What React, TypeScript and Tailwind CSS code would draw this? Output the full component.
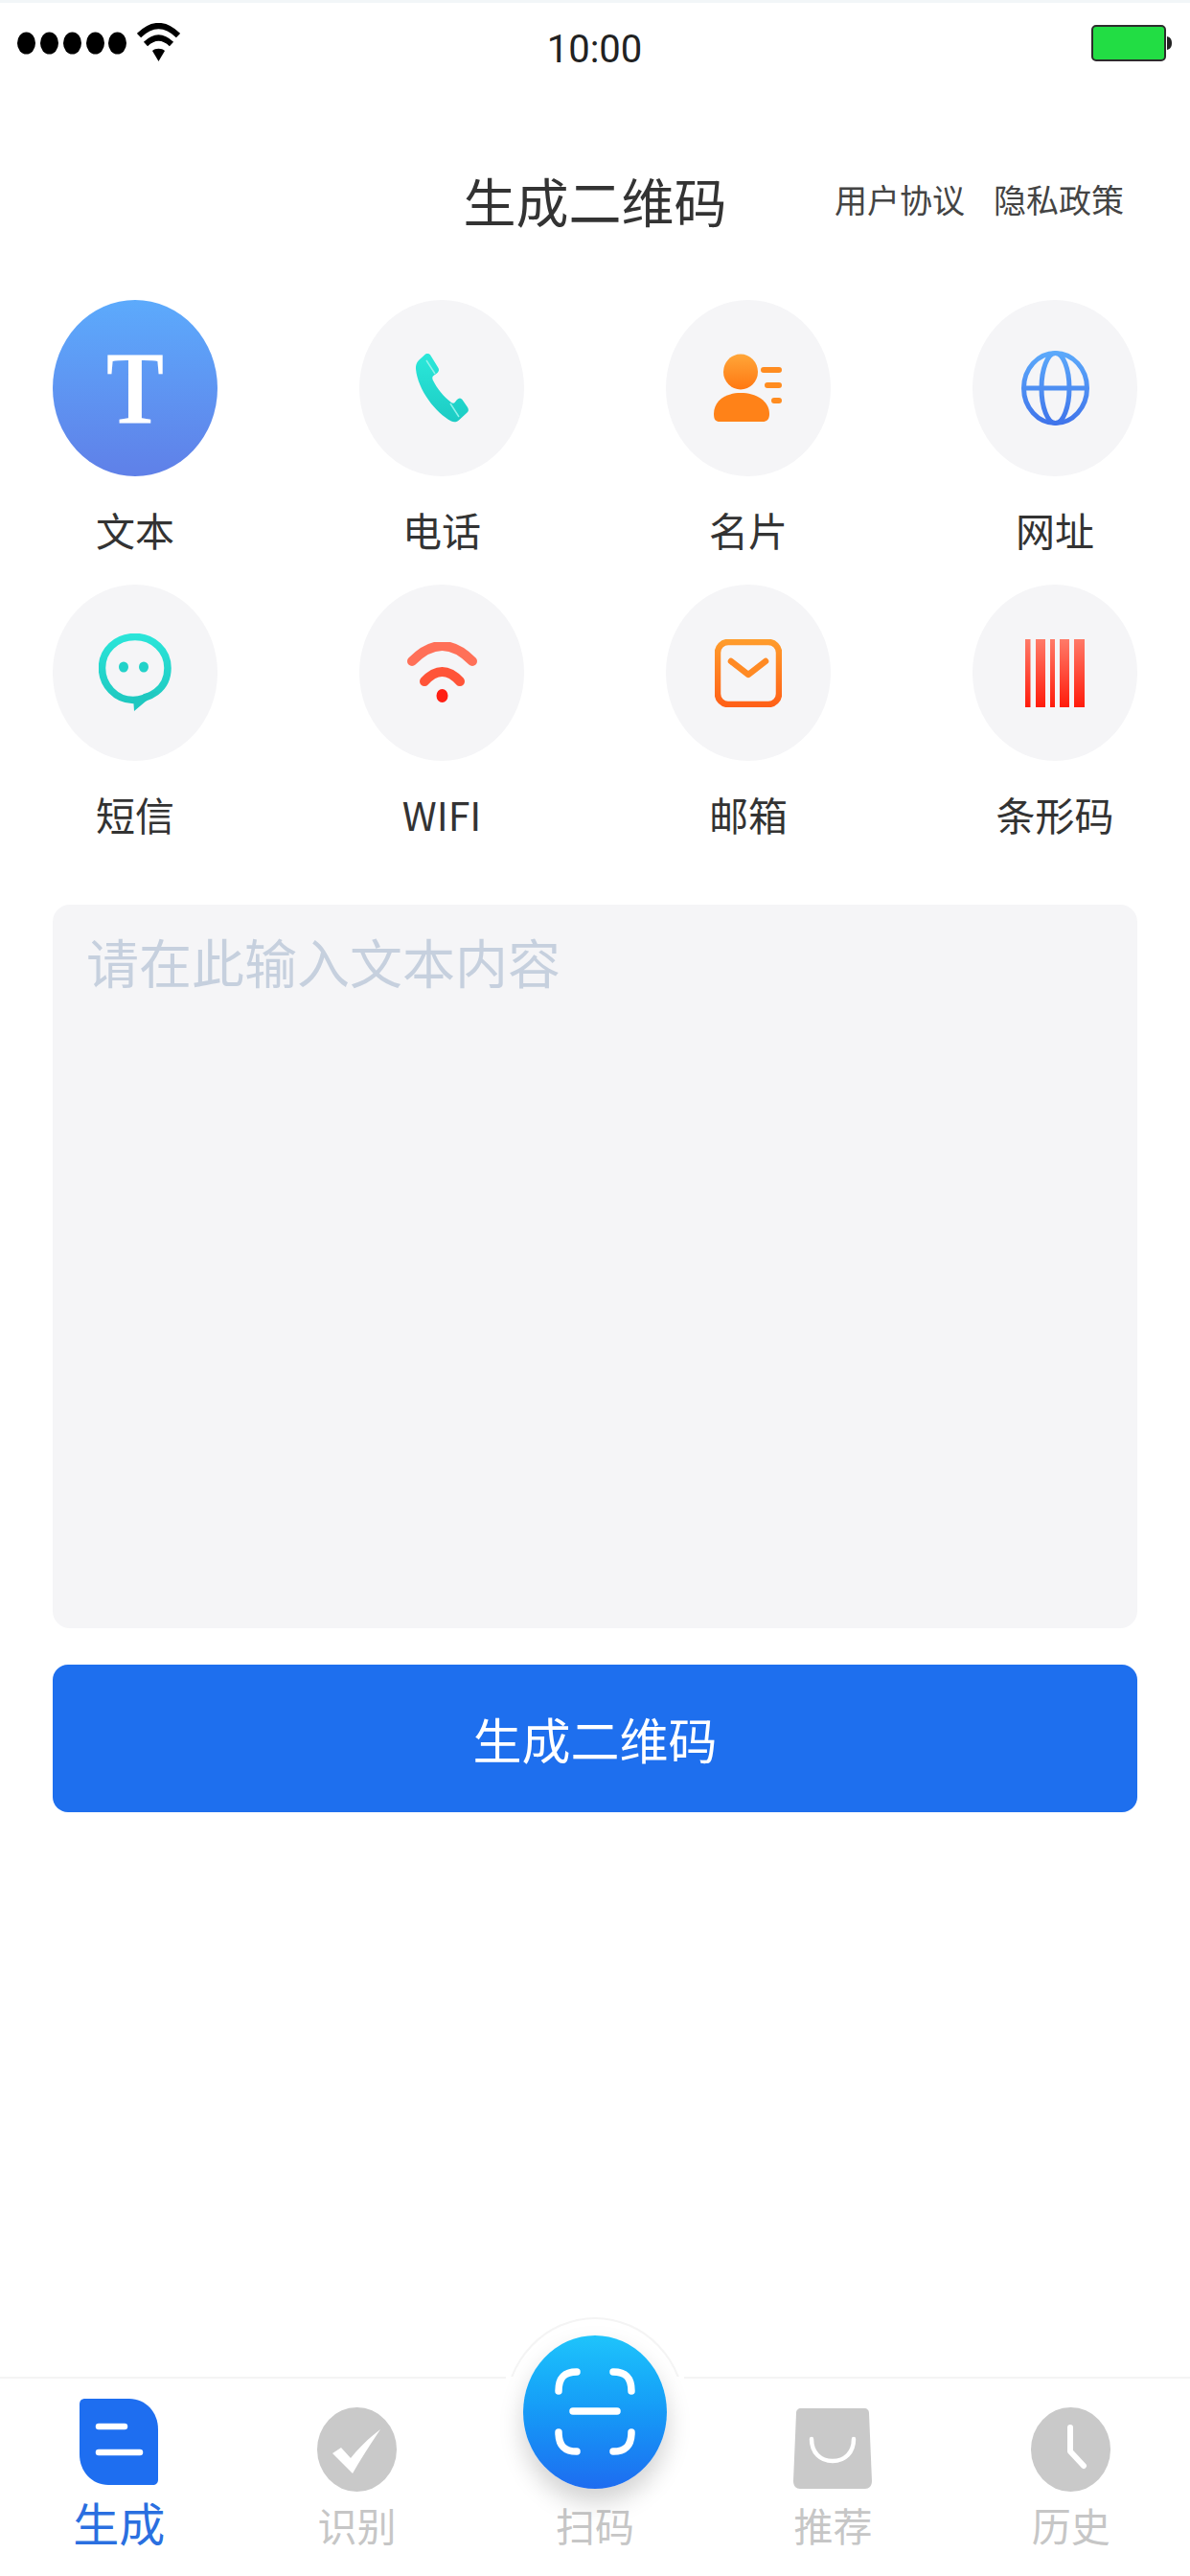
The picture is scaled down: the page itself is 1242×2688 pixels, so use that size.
const CJK = "font-['Noto_Sans_CJK_SC','Noto_Sans',sans-serif]";

function Grad({ id, from, to }: { id: string; from: string; to: string }) {
  return (
    <linearGradient id={id} x1="0" y1="0" x2="0" y2="1">
      <stop offset="0" stopColor={from} />
      <stop offset="1" stopColor={to} />
    </linearGradient>
  );
}

function PhoneIcon() {
  return (
    <svg width="55" height="72" viewBox="0 0 55 72">
      <defs><Grad id="phone" from="#2be8da" to="#1cccc4" /></defs>
      <path
        fill="url(#phone)"
        d="M9 1.500C11 -0.500 14 -0.500 15.500 2L23.500 15C24.500 17 24 19 22 20.500L18.500 23C17 24 17 26 18 28C22 36 29 45 37 51C38.500 52 40 52 41 50.500L43 48C45 46 47 46 48.500 48L54 56C55.500 58.500 55 60.500 53 62L46 68.500C43 71.500 40 72 37 70.500C21 62 2 38 0 16C-0.300 12 1 9 3.500 6.500Z"
      />
      <path d="M11 7L20 21M36 52L45 66" stroke="#8ff2ea" strokeWidth="1.500" />
    </svg>
  );
}

function CardIcon() {
  return (
    <svg width="72" height="74" viewBox="0 0 72 74">
      <defs><Grad id="card" from="#ffa639" to="#ff7812" /></defs>
      <ellipse cx="28" cy="20" rx="18" ry="18.500" fill="url(#card)" />
      <path fill="#ff8218" d="M0 64C0 50 12 42 28 42C44 42 58 50 58 64C58 70 55 72 51 72H6C2 72 0 70 0 64Z" />
      <path d="M52 18H68M56 34H68M63 50H68" stroke="#ff8c20" strokeWidth="6" strokeLinecap="round" />
    </svg>
  );
}

function GlobeIcon() {
  return (
    <svg width="71" height="78" viewBox="0 0 71 78" fill="none">
      <defs>
        <linearGradient id="globe" gradientUnits="userSpaceOnUse" x1="0" y1="0" x2="0" y2="78">
          <stop offset="0" stopColor="#5caafb" />
          <stop offset="1" stopColor="#3f73ea" />
        </linearGradient>
      </defs>
      <g stroke="url(#globe)" strokeWidth="5">
        <ellipse cx="35.500" cy="39" rx="33" ry="36.500" />
        <ellipse cx="35.500" cy="39" rx="14.500" ry="36.500" />
        <path d="M2.500 39H68.500" />
      </g>
    </svg>
  );
}

function SmsIcon() {
  return (
    <svg width="76" height="82" viewBox="0 0 76 82" fill="none">
      <defs>
        <linearGradient id="sms" gradientUnits="userSpaceOnUse" x1="0" y1="0" x2="0" y2="82">
          <stop offset="0" stopColor="#2be6da" />
          <stop offset="1" stopColor="#1cc4bc" />
        </linearGradient>
      </defs>
      <path
        stroke="url(#sms)"
        strokeWidth="7.500"
        d="M38 3.500C57 3.500 72 18 72 36C72 46 68 55 60 61C56 64 52 66 47 67.500C43 69 39 69.500 36 69.500C18 69.500 3.500 54 3.500 36C3.500 18 18 3.500 38 3.500Z"
      />
      <path fill="#1fc8c0" d="M36 66L44 66L47 63L62 60L37 81Z" />
      <ellipse cx="26" cy="35" rx="5" ry="5.500" fill="#22d2c9" />
      <ellipse cx="47" cy="35" rx="5" ry="5.500" fill="#22d2c9" />
    </svg>
  );
}

function WifiRedIcon() {
  return (
    <svg width="73" height="64" viewBox="0 0 73 64" fill="none">
      <path d="M5 20Q36.500 -12 68 20" stroke="#ff7058" strokeWidth="10" strokeLinecap="round" />
      <path d="M18 41Q36.500 21 55 41" stroke="#ff5438" strokeWidth="10" strokeLinecap="round" />
      <ellipse cx="36.500" cy="56" rx="6" ry="7" fill="#ff1f14" />
    </svg>
  );
}

function MailIcon() {
  return (
    <svg width="70" height="71" viewBox="0 0 70 71" fill="none">
      <defs>
        <linearGradient id="mail" gradientUnits="userSpaceOnUse" x1="0" y1="0" x2="0" y2="71">
          <stop offset="0" stopColor="#ff9d2c" />
          <stop offset="1" stopColor="#ff5f17" />
        </linearGradient>
      </defs>
      <rect x="3" y="3" width="64" height="65" rx="11" stroke="url(#mail)" strokeWidth="6.500" />
      <path d="M17 23L35 37L53 23" stroke="#ff8a24" strokeWidth="6.500" strokeLinecap="round" strokeLinejoin="round" />
    </svg>
  );
}

function BarcodeIcon() {
  return (
    <svg width="62" height="71" viewBox="0 0 62 71">
      <defs><Grad id="bars" from="#ff7a68" to="#ff1c0c" /></defs>
      <rect x="0" y="0" width="5.500" height="71" fill="url(#bars)" />
      <rect x="11" y="0" width="10" height="71" fill="url(#bars)" />
      <rect x="26" y="0" width="5" height="71" fill="url(#bars)" />
      <rect x="36" y="0" width="10" height="71" fill="url(#bars)" />
      <rect x="51" y="0" width="11" height="71" fill="url(#bars)" />
    </svg>
  );
}

const types = [
  [
    { label: "文本", active: true, icon: <span className="inline-block scale-y-[1.2] font-['Liberation_Serif',serif] text-[90px] font-bold leading-none text-white">T</span> },
    { label: "电话", icon: <PhoneIcon /> },
    { label: "名片", icon: <CardIcon /> },
    { label: "网址", icon: <GlobeIcon /> },
  ],
  [
    { label: "短信", icon: <SmsIcon /> },
    { label: "WIFI", icon: <WifiRedIcon /> },
    { label: "邮箱", icon: <MailIcon /> },
    { label: "条形码", icon: <BarcodeIcon /> },
  ],
];

function DocTab() {
  return (
    <svg width="82" height="90" viewBox="0 0 82 90">
      <path fill="#1e6ef0" d="M6 0H52C69 0 82 14 82 32V84C82 88 80 90 76 90H30C13 90 0 76 0 58V6C0 2 2 0 6 0Z" />
      <path d="M20 29H47M20 56H63" stroke="#fff" strokeWidth="6.500" strokeLinecap="round" />
    </svg>
  );
}

function CheckTab() {
  return (
    <svg width="83" height="88" viewBox="0 0 83 88">
      <ellipse cx="41.500" cy="44" rx="41.500" ry="44" fill="#c9c9c9" />
      <path fill="#fff" d="M16 48L25 42L35 53C44 42 54 32 66 23C56 38 46 53 37 69Z" />
    </svg>
  );
}

function BagTab() {
  return (
    <svg width="82" height="84" viewBox="0 0 82 84" fill="none">
      <path fill="#c9c9c9" d="M8 0H74C77 0 79 2 79 5L82 76C82 81 79 84 75 84H7C3 84 0 81 0 76L3 5C3 2 5 0 8 0Z" />
      <path d="M19 32C19 46 28 55 41 55C54 55 63 46 63 32" stroke="#fff" strokeWidth="4.500" strokeLinecap="round" />
    </svg>
  );
}

function ClockTab() {
  return (
    <svg width="83" height="88" viewBox="0 0 83 88" fill="none">
      <ellipse cx="41.500" cy="44" rx="41.500" ry="44" fill="#c9c9c9" />
      <path d="M41 21V46L55 61" stroke="#fff" strokeWidth="6" strokeLinecap="round" strokeLinejoin="round" />
    </svg>
  );
}

function ScanButton() {
  return (
    <div className="absolute bottom-[3px] left-0 flex h-[160px] w-[150px] items-center justify-center rounded-[50%] bg-gradient-to-b from-[#1fc4fb] to-[#1e6cf0] shadow-[0_14px_26px_rgba(0,0,0,0.18)]">
      <svg width="150" height="160" viewBox="0 0 150 160" fill="none">
        <g stroke="#fff" strokeWidth="7.500" strokeLinecap="round">
          <path d="M56 38C43 38 37 44 37 58" />
          <path d="M94 38C107 38 113 44 113 58" />
          <path d="M37 101C37 115 43 121 56 121" />
          <path d="M113 101C113 115 107 121 94 121" />
          <path d="M52 79H98" />
        </g>
      </svg>
    </div>
  );
}

export default function App() {
  return (
    <div className={`${CJK} relative flex h-[2688px] w-[1242px] flex-col overflow-hidden bg-white text-[#333]`}>
      <div className="h-[3px] bg-[#f2f6f8]" />

      {/* status bar */}
      <div className="flex h-[84px] items-center justify-between pl-[18px] pr-[19px]">
        <div className="flex w-[200px] items-center gap-[11px]">
          <svg width="114" height="24" viewBox="0 0 114 24">
            {[9.500, 33.500, 57.500, 81.500, 104.500].map((cx) => (
              <ellipse key={cx} cx={cx} cy="12" rx="9.500" ry="11.500" fill="#000" />
            ))}
          </svg>
          <svg width="45" height="40" viewBox="0 0 45 40" fill="none" className="-mt-[3px]">
            <path d="M2 13Q22.500 -7 43 13" stroke="#000" strokeWidth="6" />
            <path d="M9 22Q22.500 9 36 22" stroke="#000" strokeWidth="6" />
            <path d="M16 29C19 26 26 26 29 29L22.500 40Z" fill="#000" />
          </svg>
        </div>
        <span className="mt-[14px] font-['Roboto',sans-serif] text-[40px] leading-none text-[#222]">10:00</span>
        <div className="flex w-[200px] justify-end">
          <svg width="84" height="38" viewBox="0 0 84 38">
            <rect x="1" y="1" width="76" height="36" rx="4" fill="#22dd44" stroke="#2c2c2c" strokeWidth="2" />
            <path d="M79 12C83 13 84 16 84 19C84 22 83 25 79 26Z" fill="#222" />
          </svg>
        </div>
      </div>

      {/* title */}
      <div className="mt-[84px] grid h-[80px] grid-cols-[1fr_auto_1fr] items-center">
        <div />
        <h1 className="-mt-[5px] text-[55px] font-normal leading-none text-[#333]">生成二维码</h1>
        <div className="-mt-[6px] flex justify-end gap-[30px] pr-[69px] text-[34px] leading-none text-[#444]">
          <span>用户协议</span>
          <span>隐私政策</span>
        </div>
      </div>

      {/* code types */}
      <div className="mt-[62px] flex flex-col px-[55px]">
        {types.map((row, i) => (
          <div key={i} className="flex h-[297px] justify-between">
            {row.map((t) => (
              <div key={t.label} className="flex w-[172px] flex-col items-center">
                <div
                  className={
                    t.active
                      ? "flex h-[184px] w-[172px] items-center justify-center rounded-[50%] bg-gradient-to-b from-[#5caafc] to-[#5f80e8]"
                      : "flex h-[184px] w-[172px] items-center justify-center rounded-[50%] bg-[#f5f5f7]"
                  }
                >
                  {t.icon}
                </div>
                <span className="mt-[30px] whitespace-nowrap text-[41px] leading-[50px] text-[#333]">{t.label}</span>
              </div>
            ))}
          </div>
        ))}
      </div>

      {/* input + submit */}
      <div className="mt-[37px] flex flex-col gap-[38px] px-[55px]">
        <div className="h-[755px] rounded-[18px] bg-[#f5f5f7] px-[35px] pt-[23px] text-[55px] leading-[70px] text-[#c6d0de]">
          请在此输入文本内容
        </div>
        <button className="flex h-[154px] items-center justify-center rounded-[16px] bg-[#1e6fee] text-[51px] leading-none text-white">
          生成二维码
        </button>
      </div>

      {/* tab bar */}
      <div className="relative mt-auto grid grid-cols-5 border-t-2 border-[#f4f4f4] pb-[16px] pt-[21px]">
        <div className="absolute -top-[64px] left-[526px] h-[64px] w-[190px] overflow-hidden">
          <div className="h-[200px] w-[190px] rounded-[50%] border-2 border-[#f4f4f4] bg-white" />
        </div>
        <div className="absolute -top-[2px] left-[528px] h-[2px] w-[186px] bg-white" />

        <div className="flex flex-col items-center">
          <div className="flex h-[97px] items-start"><DocTab /></div>
          <span className="h-[72px] text-[48px] leading-[63px] text-[#2a6fe0]">生成</span>
        </div>
        <div className="flex flex-col items-center">
          <div className="flex h-[97px] items-start pt-[9px]"><CheckTab /></div>
          <span className="h-[72px] text-[41px] leading-[68px] text-[#c6c6c6]">识别</span>
        </div>
        <div className="flex flex-col items-center">
          <div className="relative h-[97px] w-[150px]"><ScanButton /></div>
          <span className="h-[72px] text-[41px] leading-[68px] text-[#c6c6c6]">扫码</span>
        </div>
        <div className="flex flex-col items-center">
          <div className="flex h-[97px] items-start pt-[10px]"><BagTab /></div>
          <span className="h-[72px] text-[41px] leading-[68px] text-[#c6c6c6]">推荐</span>
        </div>
        <div className="flex flex-col items-center">
          <div className="flex h-[97px] items-start pt-[9px]"><ClockTab /></div>
          <span className="h-[72px] text-[41px] leading-[68px] text-[#c6c6c6]">历史</span>
        </div>
      </div>
    </div>
  );
}
